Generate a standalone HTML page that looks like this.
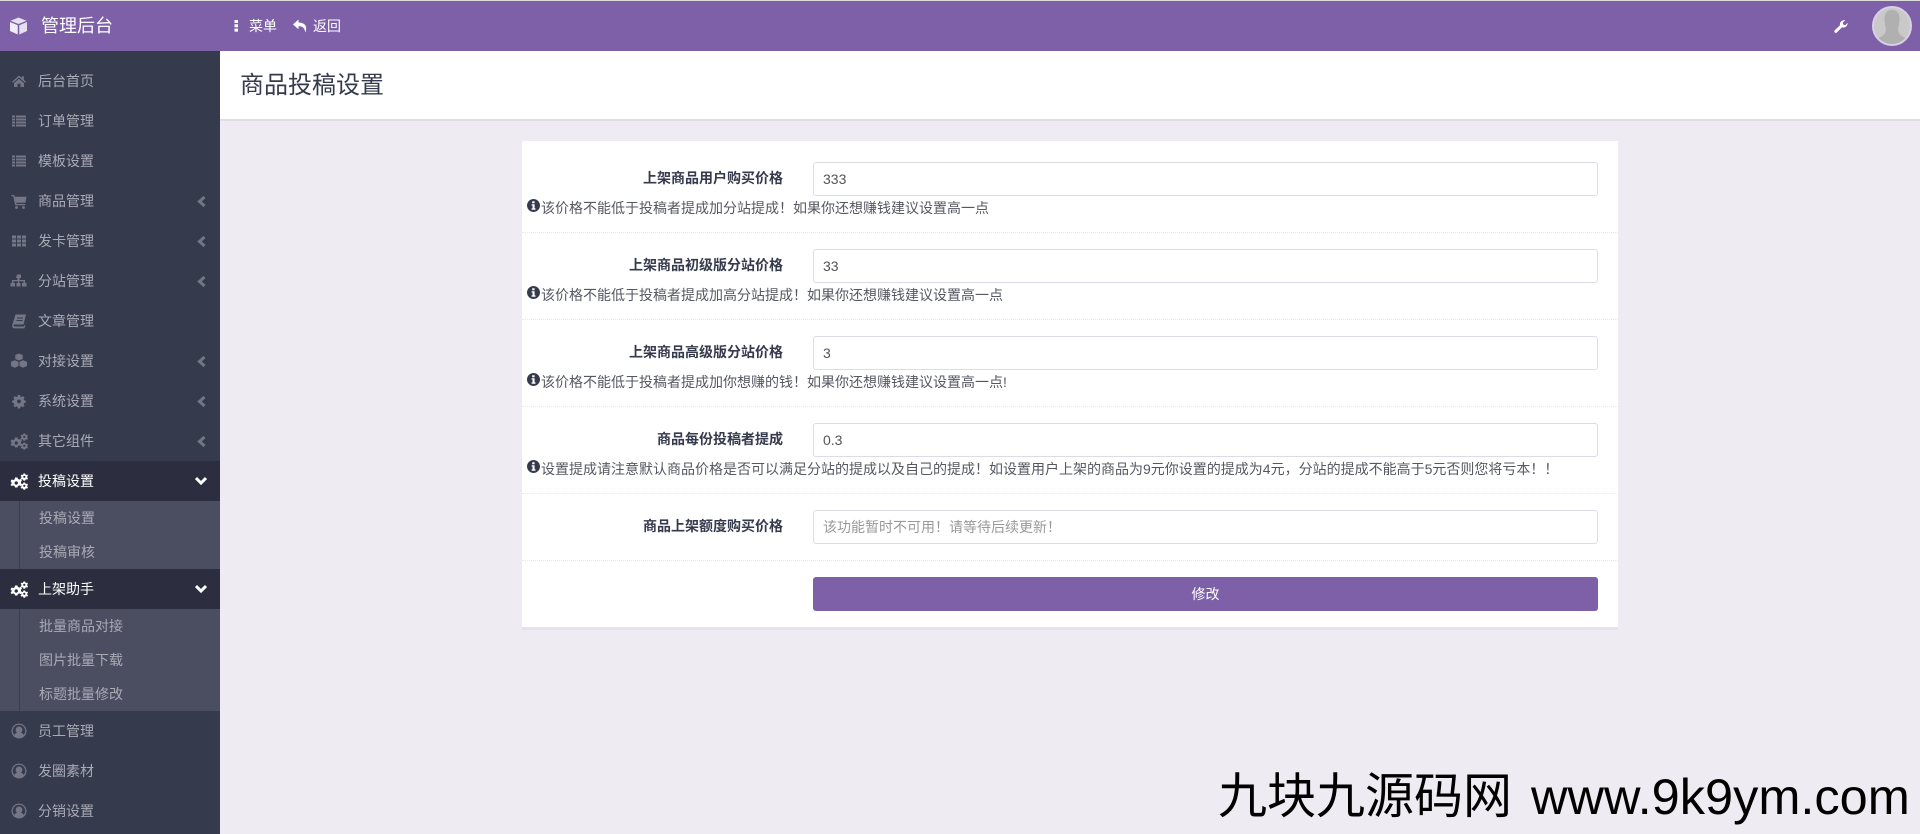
<!DOCTYPE html>
<html lang="zh-CN">
<head>
<meta charset="utf-8">
<title>商品投稿设置</title>
<style>
*{box-sizing:border-box;margin:0;padding:0}
html,body{width:1920px;height:834px;overflow:hidden;background:#eeecf2;font-family:"Liberation Sans","Noto Sans CJK SC",sans-serif;font-size:14px;color:#363a4d}
.abs,.abs-t{position:absolute;white-space:nowrap}
#strip{left:0;top:0;width:1920px;height:1px;background:#dcdcdc}
#hdr{position:absolute;left:0;top:1px;width:1920px;height:50px;background:#7e60a9}
#side{position:absolute;left:0;top:51px;width:220px;height:783px;background:#363a4d}
#chead{position:absolute;left:220px;top:51px;width:1700px;height:70px;background:#fff;border-bottom:2px solid #dfdbe9}
.it{position:absolute;left:0;width:220px;height:40px;line-height:40px;color:#a9aab6}
.it span{position:absolute;left:38px;top:0}
.it svg.ic{position:absolute;left:10px;top:11px;width:18px;height:18px;fill:#747685}
.it svg.ch{position:absolute;left:197px;top:15px;width:10px;height:11px;fill:none;stroke:#747685;stroke-width:3}
.act{background:#2c2e3f;color:#fff}
.act svg.ic{fill:#fff}
.act svg.dn{position:absolute;left:195px;top:15px;width:12px;height:10px;fill:none;stroke:#fff;stroke-width:3}
.sub{position:absolute;left:0;width:220px;background:#4b4e60}
.sub:before{content:"";position:absolute;left:19px;top:0;bottom:0;width:1px;background:#3b3e50}
.sub div{height:34px;line-height:34px;padding-left:39px;color:#a9aab6}
#card{position:absolute;left:522px;top:141px;width:1096px;height:489px;background:#fff;border-bottom:3px solid #e5e2ec}
.sep{position:absolute;left:522px;width:1096px;height:1px;border-top:1px dotted #e8e8ea}
.lb{position:absolute;right:1137px;font-weight:bold;line-height:20px;white-space:nowrap;color:#363a4d}
.inp{position:absolute;left:813px;width:785px;height:34px;border:1px solid #dedbe9;border-radius:3px;background:#fff;font:14px "Liberation Sans","Noto Sans CJK SC",sans-serif;color:#555;padding:0 9px;outline:0}
.inp::placeholder{color:#999;opacity:1}
.hp{position:absolute;left:541px;line-height:20px;white-space:nowrap;color:#555862}
.inf{position:absolute;left:527px;width:13px;height:13px}
#btn{position:absolute;left:813px;top:577px;width:785px;height:34px;background:#7e60a9;border-radius:3px;color:#fff;text-align:center;line-height:34px}
.wm{position:absolute;line-height:60px;color:#000;white-space:nowrap}
</style>
</head>
<body>
<svg width="0" height="0" style="position:absolute">
<defs>
<symbol id="home" viewBox="0 0 18 18"><path d="M9 3.500 L2 9.700 L3 10.700 L9 5.500 L15 10.700 L16 9.700 L13.800 7.700 V4.200 H11.800 V6 Z M4 11.200 L9 6.800 L14 11.200 V15 H10.500 V11.800 H7.500 V15 H4 Z"/></symbol>
<symbol id="list" viewBox="0 0 18 18"><path d="M2 3.500h3v2h-3zM6 3.500h10v2h-10zM2 6.500h3v2h-3zM6 6.500h10v2h-10zM2 9.500h3v2h-3zM6 9.500h10v2h-10zM2 12.500h3v2h-3zM6 12.500h10v2h-10z"/></symbol>
<symbol id="cart" viewBox="0 0 18 18"><path d="M1.500 3h2.700l.5 1.700h11.800l-1 6H6.200l.3 1.300h8.700v1.300H5.200L3.300 4.400H1.500z"/><circle cx="6.500" cy="15.500" r="1.400"/><circle cx="13.500" cy="15.500" r="1.400"/></symbol>
<symbol id="grid" viewBox="0 0 18 18"><path d="M2 3.500h4v3h-4zM7 3.500h4v3h-4zM12 3.500h4v3h-4zM2 7.500h4v3h-4zM7 7.500h4v3h-4zM12 7.500h4v3h-4zM2 11.500h4v3h-4zM7 11.500h4v3h-4zM12 11.500h4v3h-4z"/></symbol>
<symbol id="site" viewBox="0 0 18 18"><path d="M7 2.500h4v3.500h-1.400v2h5.400v3h1.500v3.500h-4.500v-3.500h1.500v-1.800h-4.400v1.800h1.400v3.500h-4v-3.500h1.400v-1.800h-4.400v1.800h1.500v3.500h-4.500v-3.500h1.500v-3h5.400v-2h-1.400z"/></symbol>
<symbol id="book" viewBox="0 0 18 18"><path d="M5.500 2.500h10.500l-2.500 10H4.500c-.7 0-1 .5-.9 1s.5 1 1.200 1H14l.6-1.700.8.600-1 3H4.500C3 16.400 1.800 15 2.200 13.200zM7 5.500v1h6v-1zM6.500 8v1h6v-1z"/></symbol>
<symbol id="cubes" viewBox="0 0 18 18"><path d="M9 1.500l3.700 1.500v4l-3.700 1.500-3.700-1.500v-4zM4.800 8.200l3.700 1.500v4.300l-3.700 1.700-3.800-1.700V9.700zM13.200 8.200l3.800 1.500v4.300l-3.800 1.700-3.700-1.700V9.700z"/></symbol>
<symbol id="cog" viewBox="0 0 18 18"><path fill-rule="evenodd" d="M7.700 2.500h2.600l.4 2 1.500.6 1.700-1.100 1.800 1.800-1.100 1.700.6 1.500 2 .4v2.600l-2 .4-.6 1.500 1.100 1.700-1.800 1.800-1.700-1.100-1.500.6-.4 2H7.700l-.4-2-1.500-.6-1.700 1.100-1.800-1.800 1.100-1.700-.6-1.500-2-.4V9.400l2-.4.600-1.500-1.100-1.700 1.800-1.800 1.700 1.100 1.500-.6z M9 8a2.400 2.400 0 1 0 .01 0z" transform="translate(1.500 .8) scale(.83)"/></symbol>
<symbol id="cogs" viewBox="0 0 18 18"><path fill-rule="evenodd" d="M5 5.500h2.500l.4 1.400 1.400.7 1.300-.7 1.400 1.700-1 1.100v1.600l1 1.100-1.400 1.700-1.300-.7-1.400.7-.4 1.400H5l-.4-1.400-1.400-.7-1.300.7L.5 12.900l1-1.100v-1.600l-1-1.100 1.400-1.700 1.300.7 1.400-.7z M6.250 9.300a1.700 1.700 0 1 0 .01 0z"/><path fill-rule="evenodd" d="M13.500 1.500h1.600l.3 1 1 .5.900-.4.700 1.300-.8.700v1l.8.700-.7 1.300-.9-.4-1 .5-.3 1h-1.600l-.3-1-1-.5-.9.400-.7-1.300.8-.7v-1l-.8-.7.7-1.300.9.400 1-.5z M14.300 3.700a1.100 1.100 0 1 0 .01 0z"/><path fill-rule="evenodd" d="M13.500 10.500h1.600l.3 1 1 .5.900-.4.700 1.300-.8.700v1l.8.700-.7 1.300-.9-.4-1 .5-.3 1h-1.600l-.3-1-1-.5-.9.400-.7-1.300.8-.7v-1l-.8-.7.7-1.300.9.400 1-.5z M14.300 12.700a1.100 1.100 0 1 0 .01 0z"/></symbol>
<symbol id="user" viewBox="0 0 18 18"><path fill-rule="evenodd" d="M9 1.500a7.500 7.500 0 1 0 .01 0z M9 2.800a6.200 6.200 0 0 1 4.700 10.200c-.5-1.300-1.600-2.100-2.700-2.300a3.400 3.400 0 1 0-4 0c-1.100.2-2.200 1-2.700 2.300A6.200 6.200 0 0 1 9 2.800z"/></symbol>
<symbol id="info" viewBox="0 0 13 13"><path fill="#363a4d" fill-rule="evenodd" d="M6.500 0a6.500 6.500 0 1 0 .01 0z M5.200 2.200h2.400v2H5.200z M4.600 5.200h3v4.200h.9v1.300H4.600V9.400h.9V6.500h-.9z"/></symbol>
</defs>
</svg>

<div id="strip" class="abs"></div>
<div id="hdr"></div>
<svg class="abs" style="left:9px;top:17px" width="19" height="18" viewBox="0 0 19 18"><path fill="#e6dff0" d="M9.500 0.500 L17.500 3.700 L9.500 7 L1.500 3.700 Z"/><path fill="#f1edf6" d="M1 5 L8.700 8.200 V17.500 L1 14 Z"/><path fill="#e6dff0" d="M18 5 V14 L10.300 17.500 V8.200 Z"/></svg>
<div class="abs" style="left:41px;top:13px;font-size:18px;line-height:26px;color:#fff">管理后台</div>
<svg class="abs" style="left:234px;top:20px" width="5" height="12" viewBox="0 0 5 12"><path fill="#fff" d="M.5 0h3.500v3H.5zM.5 4.300h3.500v3H.5zM.5 8.600h3.500v3H.5z"/></svg>
<div class="abs" style="left:249px;top:16px;line-height:20px;color:#fff">菜单</div>
<svg class="abs" style="left:292px;top:18px" width="16" height="16" viewBox="0 0 16 16"><path fill="#fff" d="M6.500 1.500 L1 6.500 L6.500 11.300 V8.300 C10.500 8.300 12.500 9.500 13.300 14.500 C15.500 9.500 14 4.700 6.500 4.500 Z"/></svg>
<div class="abs" style="left:313px;top:16px;line-height:20px;color:#fff">返回</div>
<svg class="abs" style="left:1833px;top:19px" width="15" height="15" viewBox="0 0 15 15"><path fill="#fff" d="M1.500 11.500 L7 6.200 C6.400 3.600 8.700 .8 12.300 1.200 L9.700 3.600 L10.300 5.600 L12.300 6.200 L14.600 3.800 C14.800 7 12 9.400 9.100 8.300 L3.500 13.800 C2.400 14.500 .8 13 1.500 11.500 Z"/></svg>
<div class="abs" style="left:1872px;top:6px;width:40px;height:40px;border-radius:50%;border:2px solid #d8d0e6;background:#c9c9c9;overflow:hidden">
  <svg width="36" height="36" viewBox="0 0 36 36" style="display:block"><path fill="#b0b0b0" d="M18 2C12.500 2 10.500 6 10.500 11 C10.500 17 13 21 11 25 C9.500 28 5 29.500 3 31 V36 H33 V31 C31 29.500 26.500 28 25 25 C23 21 25.500 17 25.500 11 C25.500 6 23.500 2 18 2Z"/></svg>
</div>

<div id="side"></div>
<div id="chead"></div>
<div class="abs" style="left:240px;top:69px;font-size:24px;line-height:34px;color:#363a4d">商品投稿设置</div>

<div class="it" style="top:61px"><svg class="ic"><use href="#home"/></svg><span>后台首页</span></div>
<div class="it" style="top:101px"><svg class="ic"><use href="#list"/></svg><span>订单管理</span></div>
<div class="it" style="top:141px"><svg class="ic"><use href="#list"/></svg><span>模板设置</span></div>
<div class="it" style="top:181px"><svg class="ic"><use href="#cart"/></svg><span>商品管理</span><svg class="ch" viewBox="0 0 10 11"><path d="M7.500 1 L2.500 5.500 L7.500 10"/></svg></div>
<div class="it" style="top:221px"><svg class="ic"><use href="#grid"/></svg><span>发卡管理</span><svg class="ch" viewBox="0 0 10 11"><path d="M7.500 1 L2.500 5.500 L7.500 10"/></svg></div>
<div class="it" style="top:261px"><svg class="ic"><use href="#site"/></svg><span>分站管理</span><svg class="ch" viewBox="0 0 10 11"><path d="M7.500 1 L2.500 5.500 L7.500 10"/></svg></div>
<div class="it" style="top:301px"><svg class="ic"><use href="#book"/></svg><span>文章管理</span></div>
<div class="it" style="top:341px"><svg class="ic"><use href="#cubes"/></svg><span>对接设置</span><svg class="ch" viewBox="0 0 10 11"><path d="M7.500 1 L2.500 5.500 L7.500 10"/></svg></div>
<div class="it" style="top:381px"><svg class="ic"><use href="#cog"/></svg><span>系统设置</span><svg class="ch" viewBox="0 0 10 11"><path d="M7.500 1 L2.500 5.500 L7.500 10"/></svg></div>
<div class="it" style="top:421px"><svg class="ic"><use href="#cogs"/></svg><span>其它组件</span><svg class="ch" viewBox="0 0 10 11"><path d="M7.500 1 L2.500 5.500 L7.500 10"/></svg></div>
<div class="it act" style="top:461px"><svg class="ic"><use href="#cogs"/></svg><span>投稿设置</span><svg class="dn" viewBox="0 0 12 10"><path d="M1 2 L6 7 L11 2"/></svg></div>
<div class="sub" style="top:501px;height:68px"><div>投稿设置</div><div>投稿审核</div></div>
<div class="it act" style="top:569px"><svg class="ic"><use href="#cogs"/></svg><span>上架助手</span><svg class="dn" viewBox="0 0 12 10"><path d="M1 2 L6 7 L11 2"/></svg></div>
<div class="sub" style="top:609px;height:102px"><div>批量商品对接</div><div>图片批量下载</div><div>标题批量修改</div></div>
<div class="it" style="top:711px"><svg class="ic"><use href="#user"/></svg><span>员工管理</span></div>
<div class="it" style="top:751px"><svg class="ic"><use href="#user"/></svg><span>发圈素材</span></div>
<div class="it" style="top:791px"><svg class="ic"><use href="#user"/></svg><span>分销设置</span></div>

<div id="card"></div>
<div class="sep" style="top:232px"></div>
<div class="sep" style="top:319px"></div>
<div class="sep" style="top:406px"></div>
<div class="sep" style="top:493px"></div>
<div class="sep" style="top:560px"></div>

<div class="lb" style="top:168px">上架商品用户购买价格</div>
<input class="inp" style="top:162px" value="333">
<svg class="inf" style="top:199px"><use href="#info"/></svg>
<div class="hp" style="top:198px">该价格不能低于投稿者提成加分站提成！如果你还想赚钱建议设置高一点</div>

<div class="lb" style="top:255px">上架商品初级版分站价格</div>
<input class="inp" style="top:249px" value="33">
<svg class="inf" style="top:286px"><use href="#info"/></svg>
<div class="hp" style="top:285px">该价格不能低于投稿者提成加高分站提成！如果你还想赚钱建议设置高一点</div>

<div class="lb" style="top:342px">上架商品高级版分站价格</div>
<input class="inp" style="top:336px" value="3">
<svg class="inf" style="top:373px"><use href="#info"/></svg>
<div class="hp" style="top:372px">该价格不能低于投稿者提成加你想赚的钱！如果你还想赚钱建议设置高一点!</div>

<div class="lb" style="top:429px">商品每份投稿者提成</div>
<input class="inp" style="top:423px" value="0.3">
<svg class="inf" style="top:460px"><use href="#info"/></svg>
<div class="hp" style="top:459px">设置提成请注意默认商品价格是否可以满足分站的提成以及自己的提成！如设置用户上架的商品为9元你设置的提成为4元，分站的提成不能高于5元否则您将亏本！！</div>

<div class="lb" style="top:516px">商品上架额度购买价格</div>
<input class="inp" style="top:510px" placeholder="该功能暂时不可用！请等待后续更新！">

<div id="btn">修改</div>

<div class="wm" style="left:1218px;top:767px;font-size:49px">九块九源码网</div>
<div class="wm" style="left:1531px;top:767px;font-size:50.500px">www.9k9ym.com</div>
</body>
</html>
